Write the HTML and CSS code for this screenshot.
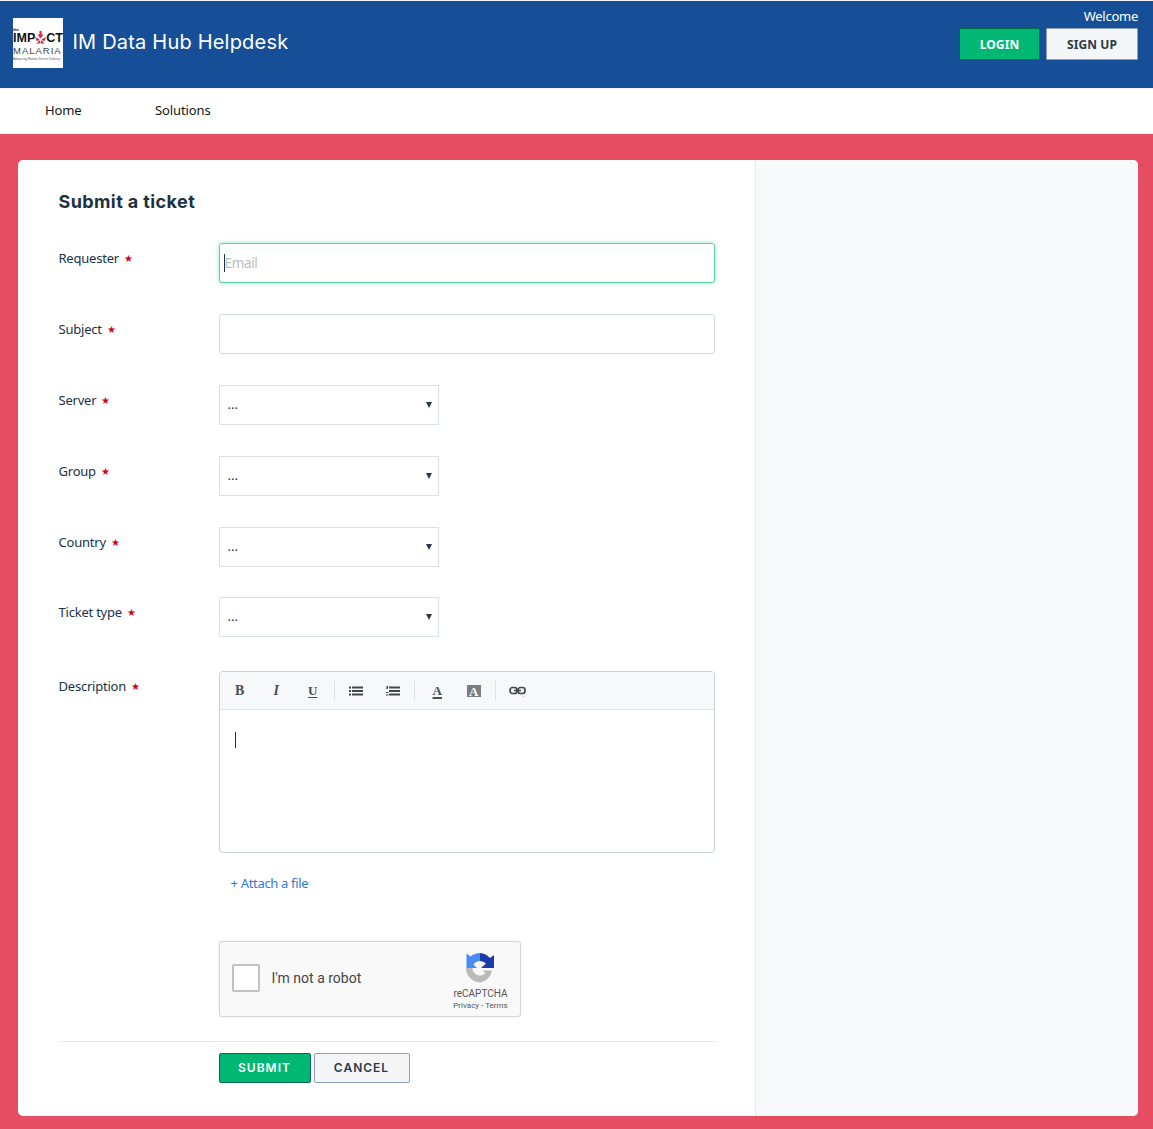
FILE: index.html
```html
<!DOCTYPE html>
<html lang="en">
<head>
<meta charset="utf-8">
<title>IM Data Hub Helpdesk</title>
<link rel="stylesheet" href="styles.css">
</head>
<body>
<header class="header">
  <div class="brand">
    <div class="logo">
      <span class="logo-the">the</span>
      <span class="logo-impact">IMP<svg class="logo-star" viewBox="0 0 11 14" width="11" height="14"><g fill="#d8233c"><path d="M4.500 0h2v3.500h2L5.500 7.500 2.500 3.500h2z"/><path d="M0 6l4.500 2.500L2 10.500z"/><path d="M11 6L6.500 8.500 9 10.500z"/><path d="M1.500 13l3-4 1 3z"/><path d="M9.500 13l-3-4-1 3z"/></g></svg>CT</span>
      <span class="logo-malaria">MALARIA</span>
      <span class="logo-tag">Advancing Malaria Service Delivery</span>
    </div>
    <span class="brand-name">IM Data Hub Helpdesk</span>
  </div>
  <div class="account">
    <div class="welcome">Welcome</div>
    <div class="account-buttons">
      <a class="btn btn-login">LOGIN</a>
      <a class="btn btn-signup">SIGN UP</a>
    </div>
  </div>
</header>
<nav class="nav">
  <a class="nav-home">Home</a>
  <a class="nav-solutions">Solutions</a>
</nav>
<main class="page">
  <div class="card">
    <section class="main">
      <h1 class="title">Submit a ticket</h1>
      <div class="row">
        <label class="label">Requester<span class="req">★</span></label>
        <div class="input input-focus"><span class="caret"></span><span class="placeholder">Email</span></div>
      </div>
      <div class="row">
        <label class="label">Subject<span class="req">★</span></label>
        <div class="input"></div>
      </div>
      <div class="row">
        <label class="label">Server<span class="req">★</span></label>
        <div class="select"><span>...</span><span class="arrow"></span></div>
      </div>
      <div class="row">
        <label class="label">Group<span class="req">★</span></label>
        <div class="select"><span>...</span><span class="arrow"></span></div>
      </div>
      <div class="row row-country">
        <label class="label">Country<span class="req">★</span></label>
        <div class="select"><span>...</span><span class="arrow"></span></div>
      </div>
      <div class="row row-last-select">
        <label class="label">Ticket type<span class="req">★</span></label>
        <div class="select"><span>...</span><span class="arrow"></span></div>
      </div>
      <div class="row row-editor">
        <label class="label">Description<span class="req">★</span></label>
        <div class="field-col">
          <div class="editor">
            <div class="toolbar">
              <span class="tool tool-b">B</span>
              <span class="tool tool-i">I</span>
              <span class="tool tool-u">U</span>
              <span class="sep"></span>
              <span class="tool">
                <svg width="15" height="10" viewBox="0 0 15 10"><g fill="#41464f"><rect x="0" y="0.500" width="2" height="2"/><rect x="0" y="4" width="2" height="2"/><rect x="0" y="7.500" width="2" height="2"/><rect x="3" y="0.500" width="11" height="2"/><rect x="3" y="4" width="11" height="2"/><rect x="3" y="7.500" width="11" height="2"/></g></svg>
              </span>
              <span class="tool">
                <svg width="15" height="10" viewBox="0 0 15 10"><g fill="#41464f"><rect x="0.500" y="0" width="1.500" height="3"/><rect x="0" y="6" width="2.500" height="1"/><rect x="0" y="8.500" width="2.500" height="1"/><rect x="3" y="0.500" width="11" height="2"/><rect x="3" y="4" width="11" height="2"/><rect x="3" y="7.500" width="11" height="2"/></g></svg>
              </span>
              <span class="sep"></span>
              <span class="tool tool-color">A</span>
              <span class="tool"><span class="tool-bg">A</span></span>
              <span class="sep"></span>
              <span class="tool tool-link">
                <svg width="17" height="12" viewBox="0 0 17 12"><g fill="none" stroke="#41464f" stroke-width="1.700"><rect x="1" y="1.500" width="7" height="6" rx="2.500"/><rect x="9" y="1.500" width="7" height="6" rx="2.500"/><path d="M5 4.500h7"/></g><path d="M13.500 10.500h2l-1 1z" fill="#999"/></svg>
              </span>
            </div>
            <div class="editor-body"><span class="caret caret-editor"></span></div>
          </div>
          <a class="attach">+ Attach a file</a>
          <div class="recaptcha">
            <span class="rc-box"></span>
            <span class="rc-text">I'm not a robot</span>
            <div class="rc-brand">
              <svg class="rc-logo" width="32" height="32" viewBox="0 0 32 32">
                <path d="M16 1A15 15 0 0 0 6.500 4.500L2.500 1.500V16H13L9.500 12.500A8 8 0 0 1 16 9Z" fill="#4a8cf5"/>
                <path d="M16 1A15 15 0 0 1 26 6L30 3V16H17L22 11.500A8 8 0 0 0 16 9Z" fill="#1c3aa9"/>
                <path d="M2 16H8.500A7.500 7.500 0 0 0 21.500 21L18.500 18.500H28A14 14 0 0 1 16 30.500A14.500 14.500 0 0 1 2 16Z" fill="#bababa"/>
              </svg>
              <span class="rc-name">reCAPTCHA</span>
              <span class="rc-links">Privacy - Terms</span>
            </div>
          </div>
        </div>
      </div>
      <div class="actions">
        <a class="action action-submit">SUBMIT</a>
        <a class="action action-cancel">CANCEL</a>
      </div>
    </section>
    <aside class="side"></aside>
  </div>
</main>
</body>
</html>
```
FILE: styles.css
```css
* { box-sizing: border-box; }
html, body { margin: 0; padding: 0; }
body {
  background: #e64d62;
  font-family: "Noto Sans", "Open Sans", sans-serif;
  font-size: 13px;
  color: #183247;
  height: 1129px;
  overflow: hidden;
}
.header {
  height: 88px;
  background: #164f97;
  border-top: 1px solid #f3f5f8;
  display: flex;
  justify-content: space-between;
  padding: 0 15px 0 13px;
}
.brand { display: flex; align-items: flex-start; padding-top: 17px; }
.logo {
  width: 50px;
  height: 50px;
  background: #fff;
  display: flex;
  flex-direction: column;
  padding-top: 9px;
  color: #111;
  font-family: "Liberation Sans", sans-serif;
  overflow: hidden;
  white-space: nowrap;
}
.logo-the { font-size: 4px; line-height: 5px; font-weight: 700; }
.logo-impact { font-size: 12.500px; line-height: 13px; font-weight: 700; display: flex; align-items: center; }
.logo-star { flex: none; margin: -1px 0 0; }
.logo-malaria { font-size: 9.500px; line-height: 11px; letter-spacing: 1px; color: #444; }
.logo-tag { font-size: 3px; line-height: 7px; color: #555; }
.brand-name {
  margin: 11px 0 0 9.500px;
  font-family: "Inter", sans-serif;
  font-size: 20px;
  line-height: 26px;
  letter-spacing: .2px;
  color: #fff;
}
.account { display: flex; flex-direction: column; align-items: flex-end; }
.welcome { color: #fff; font-size: 13px; line-height: 18px; margin-top: 6px; letter-spacing: -.25px; }
.account-buttons { display: flex; gap: 6px; margin-top: 3px; }
.btn {
  height: 32px;
  display: flex;
  align-items: center;
  justify-content: center;
  font-size: 12px;
  font-weight: 700;
  letter-spacing: .1px;
  border-radius: 1px;
}
.btn-login { width: 81px; background: #00b873; color: #fff; border: 1px solid #046b4d; }
.btn-signup { width: 92px; background: #f3f5f7; color: #2b3a4a; border: 1px solid #8aa0bb; }
.nav {
  height: 46px;
  background: #fff;
  border-top: 1px solid #f1f3f6;
  display: flex;
  align-items: center;
  color: #12151a;
  font-size: 13px;
  letter-spacing: -.1px;
  padding: 0 0 3px 45px;
}
.nav-home { width: 110px; }
.page { padding: 26px 15px 0 18px; }
.card {
  height: 956px;
  background: #fff;
  border-radius: 5px;
  display: flex;
  overflow: hidden;
}
.main { width: 738px; padding: 29px 40px 0 40.500px; border-right: 1px solid #e4e8ec; }
.side { flex: 1; background: #f8f9fb; }
.title {
  margin: 0 0 29px;
  font-family: "Inter", sans-serif;
  font-size: 18px;
  line-height: 25px;
  font-weight: 700;
  letter-spacing: .4px;
  color: #1d3140;
}
.row { display: flex; margin-bottom: 31px; }
.row-country { margin-bottom: 30px; }
.row-last-select { margin-bottom: 34px; }
.row-editor { margin-bottom: 25px; }
.label {
  width: 160px;
  flex: none;
  padding-top: 6px;
  line-height: 18px;
  font-size: 13px;
  letter-spacing: -.22px;
  color: #183247;
}
.req { color: #d0021b; font-size: 10px; line-height: 0; margin-left: 5px; vertical-align: 1px; }
.input {
  width: 496px;
  height: 40px;
  border: 1px solid #cfd7df;
  border-radius: 3px;
  background: #fff;
  display: flex;
  align-items: center;
  padding-left: 4px;
  font-size: 13.500px;
}
.input-focus {
  border-color: #5fd3a6;
  box-shadow: 0 0 4px #8ee4c4;
}
.caret { width: 1px; height: 18px; background: #12344d; flex: none; }
.placeholder { color: #b7bdc3; letter-spacing: -.35px; margin-top: -1px; }
.select {
  width: 220px;
  height: 40px;
  border: 1px solid #dbe1e7;
  background: #fff;
  display: flex;
  align-items: flex-end;
  justify-content: space-between;
  padding: 0 6px 11px 8px;
  font-size: 13px;
  line-height: 18px;
  color: #183247;
}
.arrow {
  width: 0;
  height: 0;
  border-left: 3px solid transparent;
  border-right: 3px solid transparent;
  border-top: 6px solid #2b3a4a;
  margin-bottom: 5px;
}
.field-col { width: 496px; }
.editor {
  height: 182px;
  border: 1px solid #c9d0d7;
  border-radius: 4px;
  overflow: hidden;
}
.toolbar {
  height: 38px;
  background: #f7f8fa;
  border-bottom: 1px solid #dde2e7;
  display: flex;
  align-items: center;
  padding-left: 2px;
}
.tool {
  width: 36.500px;
  flex: none;
  display: flex;
  align-items: center;
  justify-content: center;
  font-family: "Liberation Serif", serif;
  font-size: 14px;
  font-weight: 700;
  color: #4a4f57;
}
.tool-i { font-style: italic; }
.tool-u, .tool-color { text-decoration: underline; text-underline-offset: 2px; text-decoration-thickness: 1px; font-size: 13px; }
.tool-color { text-decoration-thickness: 2px; }
.tool-bg { background: #7a7d82; color: #fff; width: 14px; height: 12px; font-size: 13px; line-height: 13px; text-align: center; }
.tool-link { padding-top: 2px; }
.sep { width: 1px; height: 20px; background: #dde2e7; flex: none; margin: 0 4px 0 2.500px; }
.editor-body { padding: 22px 15px 0; }
.caret-editor { display: block; height: 16px; }
.attach {
  display: block;
  margin: 21px 0 0 12px;
  line-height: 18px;
  font-size: 13px;
  letter-spacing: -.32px;
  color: #2c7cd1;
}
.recaptcha {
  width: 302px;
  height: 76px;
  margin-top: 49px;
  background: #f9f9f9;
  border: 1px solid #d6d6d6;
  border-radius: 3px;
  box-shadow: 0 0 3px rgba(0,0,0,.08);
  display: flex;
  align-items: center;
  padding: 0 0 3px 12px;
  position: relative;
  font-family: "Roboto", sans-serif;
}
.rc-box { width: 28px; height: 28px; background: #fff; border: 2px solid #c1c1c1; border-radius: 2px; flex: none; }
.rc-text { font-size: 14px; margin-left: 12px; color: #444; }
.rc-brand {
  position: absolute;
  right: 9px;
  top: 10px;
  width: 60px;
  display: flex;
  flex-direction: column;
  align-items: center;
  color: #555;
}
.rc-logo { display: block; margin-left: -1px; }
.rc-name { font-size: 10px; line-height: 12px; margin-top: 4px; }
.rc-links { font-size: 8px; line-height: 12px; margin-top: 0; }
.actions {
  border-top: 1px solid #e4e8ec;
  padding: 11px 0 0 160px;
  display: flex;
  gap: 3px;
  width: 656.500px;
  margin-top: -1px;
}
.action {
  height: 30px;
  display: flex;
  align-items: center;
  justify-content: center;
  padding-bottom: 1px;
  font-family: "Inter", sans-serif;
  font-size: 12px;
  font-weight: 600;
  letter-spacing: 1px;
  border-radius: 2px;
}
.action-submit { width: 92px; background: #00b873; color: #fff; border: 1px solid #046b4d; }
.action-cancel { width: 96px; background: #f3f5f7; color: #2b3a4a; border: 1px solid #8aa0bb; }
```
